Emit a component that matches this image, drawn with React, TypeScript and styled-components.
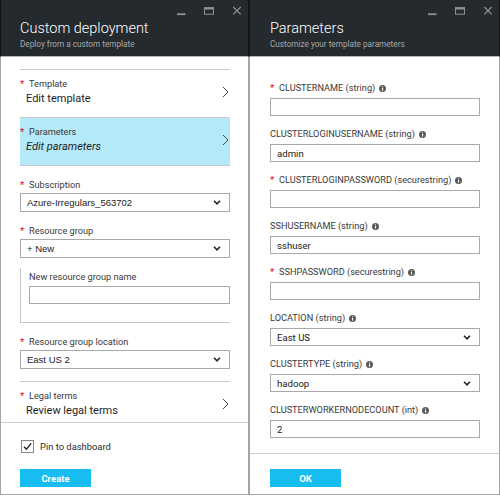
import React from "react";
import styled, { createGlobalStyle } from "styled-components";

const GlobalStyle = createGlobalStyle`
  html, body { margin: 0; padding: 0; background: #ffffff; }
  body { font-family: Roboto, "Liberation Sans", sans-serif; color: #222; }
  *, *::before, *::after { box-sizing: border-box; }
`;

const Screen = styled.div`
  display: flex;
  width: 500px;
  height: 496px;
  background: #fff;
`;

const Blade = styled.section<{ $width: number; $inset: number; $insetEnd: number }>`
  --inset: ${(p) => p.$inset}px;
  --inset-end: ${(p) => p.$insetEnd}px;
  display: flex;
  flex-direction: column;
  width: ${(p) => p.$width}px;
  height: 495px;
  border: 1px solid #a5a5a5;
  border-top: none;
`;

const BladeHeader = styled.header`
  margin: 0 -1px;
  height: 57px;
  flex: none;
  display: flex;
  flex-direction: column;
  background: #252a2f;
  border-left: 1px solid #121417;
  border-right: 1px solid #121417;
  border-bottom: 1px solid #b4b4b4;
  padding: 0 6px 0 var(--inset);
`;

const WindowControls = styled.div`
  display: flex;
  justify-content: flex-end;
  gap: 18px;
  padding-top: 6px;
  height: 16px;
`;

const HeaderTitle = styled.h1`
  margin: 4px 0 0;
  font-family: Roboto, sans-serif;
  font-weight: 300;
  font-size: 14.5px;
  line-height: 18px;
  color: #ffffff;
  white-space: nowrap;
`;

const HeaderSubtitle = styled.div`
  font-size: 8.2px;
  line-height: 12px;
  color: #a5a8ab;
  white-space: nowrap;
`;

const BladeBody = styled.div<{ $top: number; $gap?: number }>`
  flex: 1;
  min-height: 0;
  overflow: hidden;
  display: flex;
  flex-direction: column;
  gap: ${(p) => p.$gap ?? 0}px;
  padding: ${(p) => p.$top}px var(--inset-end) 0 var(--inset);
`;

const BladeFooter = styled.footer<{ $top: number }>`
  flex: none;
  display: flex;
  flex-direction: column;
  align-items: flex-start;
  border-top: 1px solid #cdcdcd;
  padding: ${(p) => p.$top}px var(--inset-end) 7px var(--inset);
`;

const NavGroup = styled.div`
  display: flex;
  flex-direction: column;
  border-bottom: 1px solid #c8c8c8;
`;

const NavItem = styled.div<{ $selected?: boolean; $mt?: number }>`
  display: flex;
  align-items: center;
  justify-content: space-between;
  margin-top: ${(p) => p.$mt ?? 0}px;
  padding: 7px 1px 10px 0;
  border-top: 1px solid #c8c8c8;
  background: ${(p) => (p.$selected ? "#b4e9f8" : "transparent")};
`;

const NavText = styled.div`
  display: flex;
  flex-direction: column;
`;

const NavValue = styled.div<{ $italic?: boolean }>`
  padding-left: 6px;
  font-size: 11px;
  line-height: 16px;
  color: #1e1e1e;
  font-style: ${(p) => (p.$italic ? "italic" : "normal")};
  white-space: nowrap;
`;

const Field = styled.div<{ $gap: number; $mt?: number }>`
  display: flex;
  flex-direction: column;
  gap: ${(p) => p.$gap}px;
  margin-top: ${(p) => p.$mt ?? 0}px;
`;

const FieldLabel = styled.div`
  display: flex;
  align-items: center;
  height: 14px;
  font-size: 9.2px;
  line-height: 14px;
  color: #3a3a3a;
  white-space: nowrap;
`;

const Required = styled.span`
  display: inline-block;
  width: 9px;
  flex: none;
  color: #e3000f;
  font-family: "Liberation Sans", sans-serif;
  font-size: 11px;
  line-height: 14px;
`;

const InfoMark = styled.svg`
  margin-left: 4px;
  flex: none;
`;

const NestedGroup = styled.div`
  display: flex;
  flex-direction: column;
  gap: 2px;
  margin-top: 10px;
  padding: 2px 0 18px 8px;
  border-left: 1px solid #c4c4c4;
  border-bottom: 1px solid #c4c4c4;
`;

const SelectBox = styled.div<{ $h: number; $classic?: boolean }>`
  display: flex;
  align-items: center;
  justify-content: space-between;
  height: ${(p) => p.$h}px;
  padding: 0 8px 0 6px;
  border: 1px solid #a9a9a9;
  background: #fff;
  color: #1a1a1a;
  font-family: ${(p) => (p.$classic ? '"Liberation Sans", Arial, sans-serif' : "Roboto, sans-serif")};
  font-size: ${(p) => (p.$classic ? "9.5px" : "9.6px")};
  white-space: nowrap;
`;

const TextBox = styled.input<{ $h: number }>`
  display: block;
  width: 100%;
  height: ${(p) => p.$h}px;
  margin: 0;
  padding: 0 6px;
  border: 1px solid #a9a9a9;
  border-radius: 0;
  background: #fff;
  color: #1a1a1a;
  font-family: Roboto, sans-serif;
  font-size: 9.6px;
  outline: none;
`;

const CheckRow = styled.label`
  display: flex;
  align-items: center;
  gap: 6px;
  height: 13px;
  margin-left: 1px;
  font-size: 9.4px;
  color: #2a2a2a;
  white-space: nowrap;
`;

const CheckBox = styled.span`
  display: flex;
  align-items: center;
  justify-content: center;
  width: 13px;
  height: 13px;
  border: 1px solid #858585;
  background: #fff;
`;

const PrimaryButton = styled.button<{ $mt: number }>`
  width: 71px;
  height: 18px;
  margin-top: ${(p) => p.$mt}px;
  padding: 0;
  border: none;
  background: #17bcf0;
  color: #fff;
  font-family: Roboto, sans-serif;
  font-weight: 700;
  font-size: 9.5px;
`;

const ControlColor = "#8f9296";

function WindowButtons() {
  return (
    <WindowControls>
      <svg width="10" height="10" viewBox="0 0 10 10">
        <rect x="1" y="7.3" width="8.5" height="1.8" fill={ControlColor} />
      </svg>
      <svg width="10" height="10" viewBox="0 0 10 10">
        <rect x="0.5" y="1.8" width="9" height="6.4" fill="none" stroke={ControlColor} strokeWidth="1" />
        <rect x="0" y="1.3" width="10" height="2.2" fill={ControlColor} />
      </svg>
      <svg width="10" height="10" viewBox="0 0 10 10">
        <path d="M1.3 1 L8.7 8.4 M8.7 1 L1.3 8.4" stroke={ControlColor} strokeWidth="1.2" fill="none" />
      </svg>
    </WindowControls>
  );
}

function Info() {
  return (
    <InfoMark width="7" height="7" viewBox="0 0 7 7">
      <circle cx="3.5" cy="3.5" r="3.5" fill="#5b5b5b" />
      <rect x="3" y="3" width="1.1" height="2.6" fill="#fff" />
      <circle cx="3.55" cy="1.85" r="0.62" fill="#fff" />
    </InfoMark>
  );
}

function RightChevron() {
  return (
    <svg width="7" height="12" viewBox="0 0 7 12">
      <polyline points="1,1 6,6 1,11" fill="none" stroke="#4a4a4a" strokeWidth="1" />
    </svg>
  );
}

function DownChevron() {
  return (
    <svg width="8" height="5" viewBox="0 0 8 5">
      <polyline points="1,0.8 4,3.8 7,0.8" fill="none" stroke="#222" strokeWidth="1.6" />
    </svg>
  );
}

function Label({ text, required, info }: { text: string; required?: boolean; info?: boolean }) {
  return (
    <FieldLabel>
      {required && <Required>*</Required>}
      <span>{text}</span>
      {info && <Info />}
    </FieldLabel>
  );
}

function Nav({ label, value, selected, italic, mt }: { label: string; value: string; selected?: boolean; italic?: boolean; mt?: number }) {
  return (
    <NavItem $selected={selected} $mt={mt}>
      <NavText>
        <Label text={label} required />
        <NavValue $italic={italic}>{value}</NavValue>
      </NavText>
      <RightChevron />
    </NavItem>
  );
}

const params: { name: string; required?: boolean; kind: "text" | "select"; value: string }[] = [
  { name: "CLUSTERNAME (string)", required: true, kind: "text", value: "" },
  { name: "CLUSTERLOGINUSERNAME (string)", kind: "text", value: "admin" },
  { name: "CLUSTERLOGINPASSWORD (securestring)", required: true, kind: "text", value: "" },
  { name: "SSHUSERNAME (string)", kind: "text", value: "sshuser" },
  { name: "SSHPASSWORD (securestring)", required: true, kind: "text", value: "" },
  { name: "LOCATION (string)", kind: "select", value: "East US" },
  { name: "CLUSTERTYPE (string)", kind: "select", value: "hadoop" },
  { name: "CLUSTERWORKERNODECOUNT (int)", kind: "text", value: "2" },
];

export default function App() {
  return (
    <>
      <GlobalStyle />
      <Screen>
        <Blade $width={249} $inset={19} $insetEnd={18}>
          <BladeHeader>
            <WindowButtons />
            <HeaderTitle>Custom deployment</HeaderTitle>
            <HeaderSubtitle>Deploy from a custom template</HeaderSubtitle>
          </BladeHeader>
          <BladeBody $top={12}>
            <NavGroup>
              <Nav label="Template" value="Edit template" />
              <Nav label="Parameters" value="Edit parameters" selected italic />
            </NavGroup>
            <Field $gap={1} $mt={12}>
              <Label text="Subscription" required />
              <SelectBox $h={19} $classic>
                <span>Azure-Irregulars_563702</span>
                <DownChevron />
              </SelectBox>
            </Field>
            <Field $gap={1} $mt={12}>
              <Label text="Resource group" required />
              <SelectBox $h={19} $classic>
                <span>+ New</span>
                <DownChevron />
              </SelectBox>
            </Field>
            <NestedGroup>
              <Label text="New resource group name" />
              <TextBox $h={18} readOnly value="" />
            </NestedGroup>
            <Field $gap={1} $mt={12}>
              <Label text="Resource group location" required />
              <SelectBox $h={19} $classic>
                <span>East US 2</span>
                <DownChevron />
              </SelectBox>
            </Field>
            <Nav label="Legal terms" value="Review legal terms" mt={12} />
          </BladeBody>
          <BladeFooter $top={17}>
            <CheckRow>
              <CheckBox>
                <svg width="11" height="11" viewBox="0 0 11 11">
                  <polyline points="2,5.8 4.4,8.2 9.2,2.4" fill="none" stroke="#222" strokeWidth="1.4" />
                </svg>
              </CheckBox>
              Pin to dashboard
            </CheckRow>
            <PrimaryButton $mt={16}>Create</PrimaryButton>
          </BladeFooter>
        </Blade>

        <Blade $width={251} $inset={20} $insetEnd={19}>
          <BladeHeader>
            <WindowButtons />
            <HeaderTitle>Parameters</HeaderTitle>
            <HeaderSubtitle>Customize your template parameters</HeaderSubtitle>
          </BladeHeader>
          <BladeBody $top={24} $gap={11}>
            {params.map((p) => (
              <Field $gap={3} key={p.name}>
                <Label text={p.name} required={p.required} info />
                {p.kind === "select" ? (
                  <SelectBox $h={18}>
                    <span>{p.value}</span>
                    <DownChevron />
                  </SelectBox>
                ) : (
                  <TextBox $h={18} readOnly value={p.value} />
                )}
              </Field>
            ))}
          </BladeBody>
          <BladeFooter $top={15}>
            <PrimaryButton $mt={0}>OK</PrimaryButton>
          </BladeFooter>
        </Blade>
      </Screen>
    </>
  );
}
